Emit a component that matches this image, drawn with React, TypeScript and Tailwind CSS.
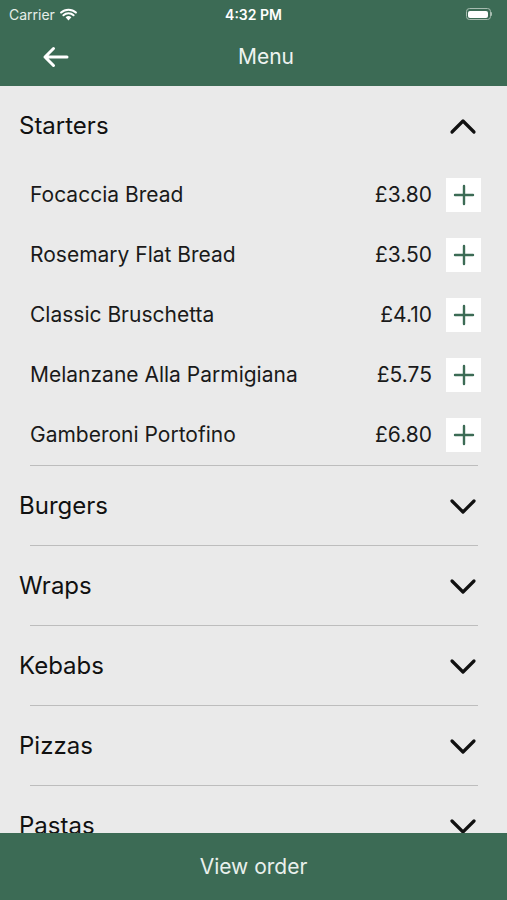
import { useState } from "react";

interface Item {
  name: string;
  price: string;
}

const starters: Item[] = [
  { name: "Focaccia Bread", price: "£3.80" },
  { name: "Rosemary Flat Bread", price: "£3.50" },
  { name: "Classic Bruschetta", price: "£4.10" },
  { name: "Melanzane Alla Parmigiana", price: "£5.75" },
  { name: "Gamberoni Portofino", price: "£6.80" },
];

const categories = ["Burgers", "Wraps", "Kebabs", "Pizzas", "Pastas"];

function Chevron({ up }: { up?: boolean }) {
  return (
    <svg width="28" height="18" viewBox="0 0 28 18" fill="none">
      <path
        d={up ? "M3 15 L14 4 L25 15" : "M3 4 L14 15 L25 4"}
        stroke="#111"
        strokeWidth="3.2"
        strokeLinecap="round"
        strokeLinejoin="round"
      />
    </svg>
  );
}

export default function App() {
  const [open, setOpen] = useState(true);

  return (
    <div
      className="h-[900px] w-[507px] flex flex-col bg-[#eaeaea] overflow-hidden"
      style={{ fontFamily: "Inter, 'Liberation Sans', sans-serif" }}
    >
      {/* header */}
      <div className="bg-[#3c6b55] text-white shrink-0">
        <div className="h-[28px] flex items-center justify-between px-[9px] relative">
          <div className="flex items-center gap-[5px] text-[14px] text-[#e6eee9]">
            <span>Carrier</span>
            <svg width="17" height="13" viewBox="0 0 17 13">
              <path d="M8.5 12.5 L5.6 9.3 A4.2 4.2 0 0 1 11.4 9.3 Z" fill="#fff" />
              <path d="M3.4 7.2 A7.4 7.4 0 0 1 13.6 7.2" stroke="#fff" strokeWidth="2" fill="none" strokeLinecap="round" />
              <path d="M1.1 4.6 A10.8 10.8 0 0 1 15.9 4.6" stroke="#fff" strokeWidth="2" fill="none" strokeLinecap="round" />
            </svg>
          </div>
          <span className="absolute left-1/2 -translate-x-1/2 text-[14px] font-semibold">4:32 PM</span>
          <div className="flex items-center mr-[6px]">
            <div className="w-[25px] h-[12px] rounded-[3.5px] border border-[#a7bcb0] p-[1.5px]">
              <div className="w-full h-full bg-white rounded-[2px]" />
            </div>
            <div className="w-[1.5px] h-[4px] bg-[#a7bcb0] rounded-r" />
          </div>
        </div>
        <div className="h-[58px] flex items-center relative">
          <svg className="ml-[42px]" width="27" height="22" viewBox="0 0 27 22" fill="none">
            <path d="M25 11 H3 M11.5 2.5 L3 11 L11.5 19.5" stroke="#fff" strokeWidth="3" strokeLinecap="round" strokeLinejoin="round" />
          </svg>
          <span className="absolute left-[238px] text-[21px] text-[#eef3f0]">Menu</span>
        </div>
      </div>

      {/* list */}
      <div className="flex-1 overflow-hidden">
        <button
          onClick={() => setOpen(!open)}
          className="w-full h-[79px] flex items-center justify-between pl-[19px] pr-[30px]"
        >
          <span className="text-[24px] text-[#111]">Starters</span>
          <Chevron up={open} />
        </button>
        {open && (
          <div>
            {starters.map((it) => (
              <div key={it.name} className="h-[60px] flex items-center pl-[30px] pr-[26px]">
                <span className="flex-1 text-[21px] text-[#1a1a1a]">{it.name}</span>
                <span className="text-[21px] text-[#1a1a1a] mr-[14px]">{it.price}</span>
                <div className="w-[35px] h-[34px] bg-white flex items-center justify-center">
                  <svg width="22" height="22" viewBox="0 0 22 22">
                    <path d="M11 2 V20 M2 11 H20" stroke="#3c6b55" strokeWidth="2.4" strokeLinecap="round" />
                  </svg>
                </div>
              </div>
            ))}
          </div>
        )}
        {categories.map((c) => (
          <div key={c}>
            <div className="ml-[30px] mr-[29px] h-px bg-[#bdbdbd]" />
            <div className="h-[79px] flex items-center justify-between pl-[19px] pr-[30px]">
              <span className="text-[24px] text-[#111]">{c}</span>
              <Chevron />
            </div>
          </div>
        ))}
      </div>

      {/* bottom */}
      <div className="h-[67px] shrink-0 bg-[#3c6b55] flex items-center justify-center">
        <span className="text-[21px] text-[#e9f0ec]">View order</span>
      </div>
    </div>
  );
}
